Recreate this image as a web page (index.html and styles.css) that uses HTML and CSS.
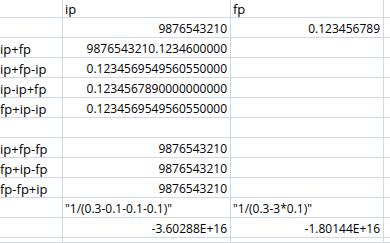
FILE: index.html
```
<!DOCTYPE html>
<html>
<head>
<meta charset="utf-8">
<link rel="stylesheet" href="styles.css">
</head>
<body>
<div class="sheet">
  <div class="c a"></div><div class="c t">ip</div><div class="c t">fp</div><div class="c e"></div>
  <div class="c a"></div><div class="c r">9876543210</div><div class="c r">0.123456789</div><div class="c e"></div>
  <div class="c a t">ip+fp</div><div class="c r">9876543210.1234600000</div><div class="c"></div><div class="c e"></div>
  <div class="c a t">ip+fp-ip</div><div class="c r">0.1234569549560550000</div><div class="c"></div><div class="c e"></div>
  <div class="c a t">ip-ip+fp</div><div class="c r">0.1234567890000000000</div><div class="c"></div><div class="c e"></div>
  <div class="c a t">fp+ip-ip</div><div class="c r">0.1234569549560550000</div><div class="c"></div><div class="c e"></div>
  <div class="c a"></div><div class="c"></div><div class="c"></div><div class="c e"></div>
  <div class="c a t">ip+fp-fp</div><div class="c r">9876543210</div><div class="c"></div><div class="c e"></div>
  <div class="c a t">fp+ip-fp</div><div class="c r">9876543210</div><div class="c"></div><div class="c e"></div>
  <div class="c a t">fp-fp+ip</div><div class="c r">9876543210</div><div class="c"></div><div class="c e"></div>
  <div class="c a"></div><div class="c">"1/(0.3-0.1-0.1-0.1)"</div><div class="c">"1/(0.3-3*0.1)"</div><div class="c e"></div>
  <div class="c a"></div><div class="c r">-3.60288E+16</div><div class="c r">-1.80144E+16</div><div class="c e"></div>
  <div class="c a"></div><div class="c"></div><div class="c"></div><div class="c e"></div>
</div>
</body>
</html>
```
FILE: styles.css
```
html, body {
  margin: 0;
  padding: 0;
  background: #ffffff;
}
.sheet {
  display: grid;
  grid-template-columns: 63px 168px 153px 6px;
  grid-template-rows: 18px repeat(11, 20px) 5px;
  width: 390px;
  height: 243px;
  overflow: hidden;
  font-family: "Open Sans", "Liberation Sans", sans-serif;
  font-size: 12px;
  color: #000000;
}
.c {
  box-sizing: border-box;
  border-right: 1px solid #d0d7e5;
  border-bottom: 1px solid #d0d7e5;
  display: flex;
  align-items: flex-end;
  padding: 0 2px 0 2px;
  line-height: 16px;
  white-space: nowrap;
  overflow: hidden;
}
.t {
  font-size: 13px;
}
.a {
  padding-left: 0;
}
.e {
  border-right: none;
}
.r {
  justify-content: flex-end;
  padding-right: 3px;
}
```
